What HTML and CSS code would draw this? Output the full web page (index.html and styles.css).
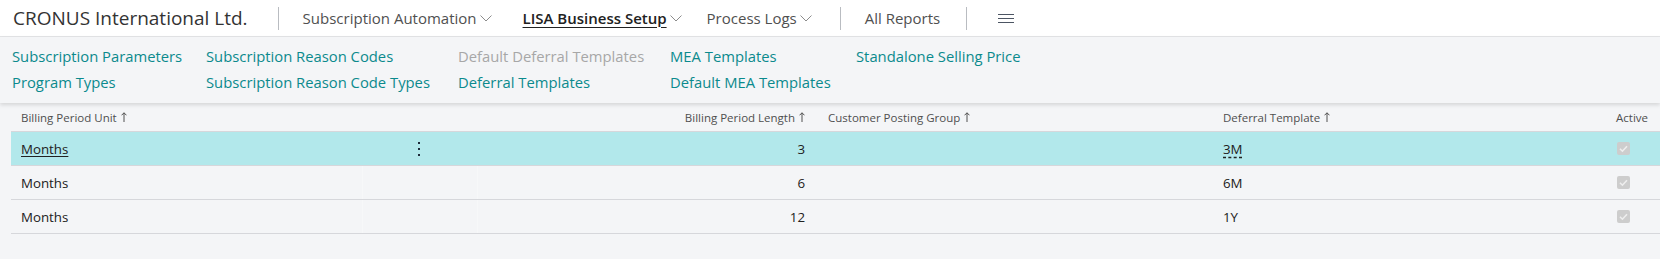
FILE: index.html
```html
<!DOCTYPE html>
<html lang="en">
<head>
<meta charset="utf-8">
<title>LISA Business Setup</title>
<link rel="stylesheet" href="styles.css">
</head>
<body>
<header class="topbar">
  <div class="company">CRONUS International Ltd.</div>
  <span class="vsep vsep-company"></span>
  <nav class="nav">
    <a class="nav-item">Subscription Automation<svg class="chev" viewBox="0 0 12 7" width="12" height="7"><path d="M0.5 0.5 L6 6 L11.5 0.5" /></svg></a>
    <a class="nav-item nav-item-active">LISA Business Setup<svg class="chev" viewBox="0 0 12 7" width="12" height="7"><path d="M0.5 0.5 L6 6 L11.5 0.5" /></svg></a>
    <a class="nav-item">Process Logs<svg class="chev" viewBox="0 0 12 7" width="12" height="7"><path d="M0.5 0.5 L6 6 L11.5 0.5" /></svg></a>
    <span class="vsep"></span>
    <a class="nav-item nav-plain">All Reports</a>
    <span class="vsep"></span>
    <button class="menu-btn" aria-label="More">
      <svg viewBox="0 0 16 9" width="16" height="9"><path d="M0 0.5 H16 M0 4.5 H16 M0 8.5 H16" /></svg>
    </button>
  </nav>
</header>

<section class="actions">
  <a class="action">Subscription Parameters</a>
  <a class="action">Program Types</a>
  <a class="action">Subscription Reason Codes</a>
  <a class="action">Subscription Reason Code Types</a>
  <a class="action action-disabled">Default Deferral Templates</a>
  <a class="action">Deferral Templates</a>
  <a class="action">MEA Templates</a>
  <a class="action">Default MEA Templates</a>
  <a class="action">Standalone Selling Price</a>
</section>

<main class="grid">
  <div class="row row-head">
    <div class="cell">Billing Period Unit<svg class="sort" viewBox="0 0 6 10" width="6" height="10"><path d="M3 10 V0.8 M0.5 3.3 L3 0.8 L5.5 3.3" /></svg></div>
    <div class="cell"></div>
    <div class="cell cell-num">Billing Period Length<svg class="sort" viewBox="0 0 6 10" width="6" height="10"><path d="M3 10 V0.8 M0.5 3.3 L3 0.8 L5.5 3.3" /></svg></div>
    <div class="cell">Customer Posting Group<svg class="sort" viewBox="0 0 6 10" width="6" height="10"><path d="M3 10 V0.8 M0.5 3.3 L3 0.8 L5.5 3.3" /></svg></div>
    <div class="cell">Deferral Template<svg class="sort" viewBox="0 0 6 10" width="6" height="10"><path d="M3 10 V0.8 M0.5 3.3 L3 0.8 L5.5 3.3" /></svg></div>
    <div class="cell">Active</div>
  </div>

  <div class="row row-selected">
    <div class="cell"><span class="link">Months</span></div>
    <div class="cell cell-kebab"><span class="kebab"><i></i><i></i><i></i></span></div>
    <div class="cell cell-num">3</div>
    <div class="cell"></div>
    <div class="cell"><span class="dotted">3M</span></div>
    <div class="cell"><span class="check"><svg viewBox="0 0 13 13" width="13" height="13"><path d="M3 6.8 L5.4 9.2 L10 4.2" /></svg></span></div>
  </div>

  <div class="row">
    <div class="cell">Months</div>
    <div class="cell cell-kebab"></div>
    <div class="cell cell-num">6</div>
    <div class="cell"></div>
    <div class="cell">6M</div>
    <div class="cell"><span class="check"><svg viewBox="0 0 13 13" width="13" height="13"><path d="M3 6.8 L5.4 9.2 L10 4.2" /></svg></span></div>
  </div>

  <div class="row">
    <div class="cell">Months</div>
    <div class="cell cell-kebab"></div>
    <div class="cell cell-num">12</div>
    <div class="cell"></div>
    <div class="cell">1Y</div>
    <div class="cell"><span class="check"><svg viewBox="0 0 13 13" width="13" height="13"><path d="M3 6.8 L5.4 9.2 L10 4.2" /></svg></span></div>
  </div>
</main>
</body>
</html>
```
FILE: styles.css
```css
* { box-sizing: border-box; }

html, body {
  margin: 0;
  padding: 0;
  background: #f4f5f7;
  font-family: "Open Sans", "Noto Sans", sans-serif;
  color: #212121;
}

/* ---------- top bar ---------- */
.topbar {
  display: flex;
  align-items: center;
  height: 37px;
  padding-left: 13px;
  background: #ffffff;
  border-bottom: 1px solid #e3e4e6;
}

.company {
  font-size: 19px;
  color: #333333;
  white-space: nowrap;
  margin-right: 30px;
}

.vsep {
  display: block;
  width: 1px;
  height: 23px;
  background: #b9bcc1;
  margin: 0 24px 0 0;
}

.nav {
  display: flex;
  align-items: center;
}

.nav .vsep { margin: 0 24px 0 0; }

.nav-item {
  display: flex;
  align-items: center;
  font-size: 15px;
  color: #505050;
  white-space: nowrap;
  margin-right: 28px;
  cursor: pointer;
}

.nav-item:first-child { margin-right: 31px; }

.nav-plain { margin-right: 26px; }

.nav-item-active {
  font-weight: 600;
  color: #212121;
  text-decoration: underline;
  text-decoration-thickness: 1px;
  text-underline-offset: 3px;
  margin-right: 25px;
}

.chev {
  margin-left: 3px;
  margin-top: 1px;
  fill: none;
  stroke: #8c8c8c;
  stroke-width: 1;
}

.menu-btn {
  display: flex;
  align-items: center;
  border: 0;
  background: none;
  padding: 0;
  margin-left: 7px;
  margin-top: 1px;
}

.menu-btn svg {
  fill: none;
  stroke: #4c5563;
  stroke-width: 1;
}

/* ---------- action bar ---------- */
.actions {
  display: grid;
  grid-template-rows: 26px 26px;
  grid-template-columns: 170px 228px 188px 162px max-content;
  grid-auto-flow: column;
  column-gap: 24px;
  padding: 6px 12px 8px;
  background: #f4f5f7;
  box-shadow: 0 2px 4px rgba(0, 0, 0, 0.13);
  position: relative;
}

.action {
  font-size: 14.8px;
  line-height: 26px;
  color: #0b8a8d;
  white-space: nowrap;
  cursor: pointer;
}

.action-disabled { color: #a7a7a7; }

/* ---------- list ---------- */
.grid {
  margin-left: 11px;
}

.row {
  display: grid;
  grid-template-columns: 351px 115px 341px 395px 393px 1fr;
  height: 34px;
  align-items: center;
  border-bottom: 1px solid #d6d7db;
  font-size: 13.3px;
}

.row-head {
  height: 29px;
  font-size: 11.5px;
  color: #4f4f4f;
}

.row-selected { background: #b2e8eb; }

.cell {
  display: flex;
  align-items: center;
  height: 100%;
  padding: 0 10px;
  white-space: nowrap;
}

.row:not(.row-head):not(.row-selected) .cell:nth-child(2),
.row:not(.row-head):not(.row-selected) .cell:nth-child(3) {
  border-left: 1px solid #f7f8f9;
}

.cell-num {
  justify-content: flex-end;
  padding-right: 13px;
}

.cell-kebab { justify-content: center; }

.sort {
  margin-left: 4px;
  fill: none;
  stroke: #505050;
  stroke-width: 1;
}

.link {
  text-decoration: underline;
  text-underline-offset: 2px;
}

.dotted {
  text-decoration: underline dashed;
  text-underline-offset: 3px;
}

.kebab {
  display: flex;
  flex-direction: column;
  gap: 4px;
  padding-right: 1px;
}

.kebab i {
  display: block;
  width: 2px;
  height: 2px;
  background: #1d2b3a;
}

.check {
  display: block;
  width: 13px;
  height: 13px;
  margin-left: 1px;
  border-radius: 2px;
  background: #cdcdcd;
}

.check svg {
  display: block;
  fill: none;
  stroke: #eeeeee;
  stroke-width: 1.6;
}
```
